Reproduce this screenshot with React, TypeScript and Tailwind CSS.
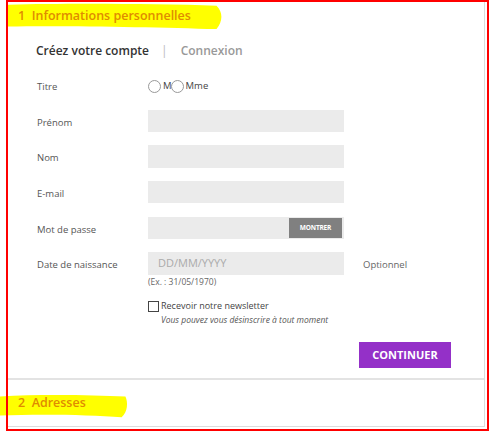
import React from "react";

function Highlight({ className, d }: { className: string; d: string }) {
  return (
    <svg className={className} viewBox="0 0 100 30" preserveAspectRatio="none">
      <path d={d} fill="#ffff00" />
    </svg>
  );
}

function Row({ label, children, extra, h }: { label: string; children: React.ReactNode; extra?: React.ReactNode; h: string }) {
  return (
    <div className={`flex items-center ${h}`}>
      <div className="w-[111px] mt-[4px] text-[9.5px] text-[#555]">{label}</div>
      {children}
      {extra}
    </div>
  );
}

export default function App() {
  return (
    <div className="relative w-[490px] h-[432px] bg-white overflow-hidden font-['Open_Sans',sans-serif]">
      <div className="absolute left-[6px] top-0 w-[483px] h-[431px] border-2 border-[#ff0000] z-20 pointer-events-none" />
      <div className="ml-[8px] w-[477px] h-[427px] border-r border-b border-[#dcdcdc] flex flex-col">
        {/* Section 1 */}
        <div className="relative h-[32px] flex items-center pl-[10px] shrink-0">
          <Highlight
            className="absolute left-0 top-[3px] w-[215px] h-[27px]"
            d="M0 2 C30 0 70 1 97 3 C100 10 100 20 97 29 C70 27 30 25 0 26 Z"
          />
          <span className="relative text-[12.5px] font-semibold text-[#e08b00]">1&nbsp;&nbsp;Informations personnelles</span>
        </div>
        <div className="flex items-center pl-[28px] mt-[11px] h-[16px] text-[12px] font-semibold shrink-0">
          <span className="text-[#333]">Créez votre compte</span>
          <span className="ml-[12px] text-[#bbb] font-normal">|</span>
          <span className="ml-[13px] text-[#999]">Connexion</span>
        </div>
        <div className="pl-[29px] mt-[20px] flex flex-col shrink-0">
          <div className="flex items-center h-[14px]">
            <div className="w-[111px] mt-[2px] text-[9.5px] text-[#555]">Titre</div>
            <div className="flex items-center text-[9.5px] text-[#444]">
              <span className="w-[13px] h-[13px] rounded-full border border-[#999] bg-white" />
              <span className="ml-[2px]">M</span>
              <span className="-ml-[1px] w-[13px] h-[13px] rounded-full border border-[#999] bg-white" />
              <span className="ml-[2px]">Mme</span>
            </div>
          </div>
          <div className="mt-[17px]">
            <Row label="Prénom" h="h-[22px]">
              <div className="w-[196px] h-[22px] bg-[#ebebeb]" />
            </Row>
          </div>
          <div className="mt-[13px]">
            <Row label="Nom" h="h-[23px]">
              <div className="w-[196px] h-[23px] bg-[#ebebeb]" />
            </Row>
          </div>
          <div className="mt-[13px]">
            <Row label="E-mail" h="h-[22px]">
              <div className="w-[196px] h-[22px] bg-[#ebebeb]" />
            </Row>
          </div>
          <div className="mt-[14px]">
            <Row label="Mot de passe" h="h-[22px]">
              <div className="w-[196px] h-[22px] bg-[#ebebeb] flex justify-end items-center pr-[2px]">
                <div className="w-[53px] h-[20px] bg-[#808080] text-white text-[6.5px] font-bold flex items-center justify-center tracking-tight">
                  MONTRER
                </div>
              </div>
            </Row>
          </div>
          <div className="mt-[13px]">
            <Row
              label="Date de naissance"
              h="h-[23px]"
              extra={<span className="ml-[19px] mt-[4px] text-[9.5px] text-[#666]">Optionnel</span>}
            >
              <div className="w-[196px] h-[23px] bg-[#ebebeb] flex items-center pl-[10px] text-[11px] text-[#aaa]">DD/MM/YYYY</div>
            </Row>
          </div>
          <div className="ml-[111px] mt-[1px] h-[12px] leading-[12px] text-[8.5px] text-[#666]">(Ex. : 31/05/1970)</div>
          <div className="ml-[111px] mt-[11px] flex items-start">
            <span className="mt-[2px] w-[11px] h-[11px] border border-[#444] bg-white shrink-0" />
            <div className="ml-[2px] flex flex-col leading-[14px]">
              <span className="text-[9px] text-[#444]">Recevoir notre newsletter</span>
              <span className="text-[8.5px] italic text-[#555]">Vous pouvez vous désinscrire à tout moment</span>
            </div>
          </div>
        </div>
        <div className="flex justify-end pr-[33px] mt-[15px] shrink-0">
          <div className="w-[92px] h-[26px] bg-[#9430c8] text-white text-[11px] font-bold flex items-center justify-center">
            CONTINUER
          </div>
        </div>
        <div className="mt-[10px] h-[2px] bg-[#e3e3e3] shrink-0" />
        {/* Section 2 */}
        <div className="relative flex-1 flex items-center pl-[10px]">
          <Highlight
            className="absolute -left-[8px] top-[14px] w-[128px] h-[24px]"
            d="M0 3 C30 0 70 1 98 3 C100 10 100 22 95 29 C70 26 30 25 0 27 Z"
          />
          <span className="relative text-[12.5px] font-semibold text-[#e08b00]">2&nbsp;&nbsp;Adresses</span>
        </div>
      </div>
    </div>
  );
}
